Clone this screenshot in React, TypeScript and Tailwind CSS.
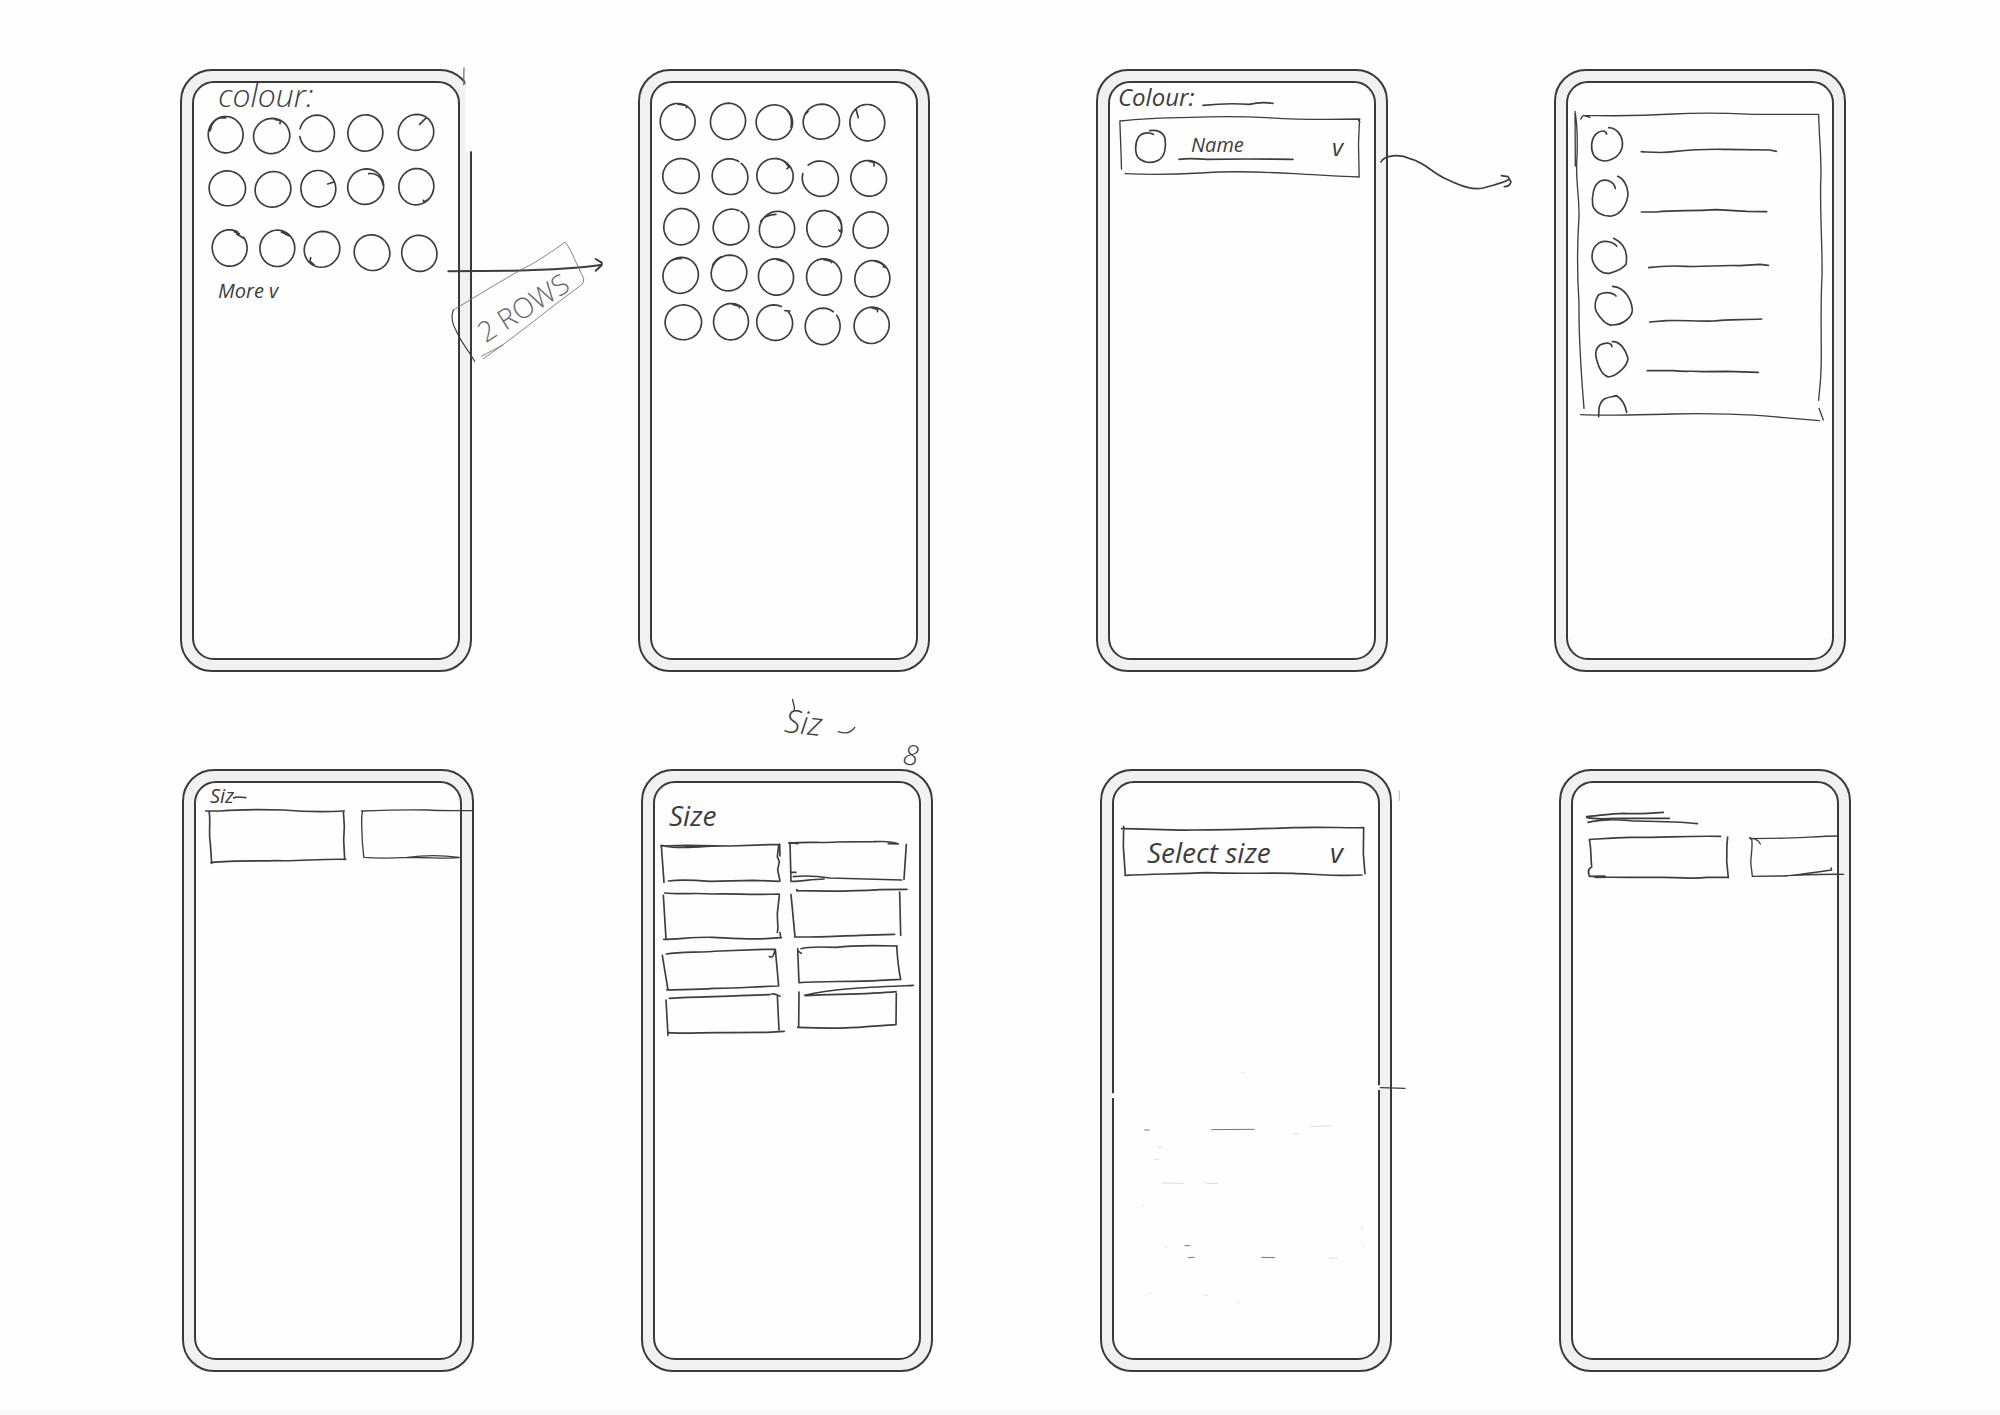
import type { ReactNode } from "react";

/* Drawing coordinates are in thirds of a pixel: 3 units = 1px. */

type InkProps = {
  x: number;
  y: number;
  w: number;
  h: number;
  d?: string;
  width?: number;
  className: string;
  children?: ReactNode;
};

function Ink({ x, y, w, h, d, width = 5, className, children }: InkProps) {
  return (
    <svg
      aria-hidden="true"
      viewBox={`${x} ${y} ${w} ${h}`}
      className={`pointer-events-none overflow-visible ${className}`}
      fill="none"
      stroke="#3d3d3d"
      strokeWidth={width}
      strokeLinecap="round"
      strokeLinejoin="round"
    >
      {d && <path d={d} />}
      {children}
    </svg>
  );
}

type Ring = { c: [number, number]; from?: number; sweep?: number; mark?: string };

function ringPath({ c, from = -60, sweep = 360 }: Ring) {
  const steps = 40;
  const seed = c[0] + c[1];
  const points: string[] = [];
  for (let i = 0; i <= steps; i++) {
    const a = ((from + (sweep * i) / steps) * Math.PI) / 180;
    const r = 53.5 + 1.2 * Math.sin(2 * a + seed);
    points.push(`${(c[0] + r * Math.cos(a)).toFixed(1)} ${(c[1] + r * Math.sin(a)).toFixed(1)}`);
  }
  return `M${points.join("L")}`;
}

const shortPalette: Ring[] = [
  { c: [197, 254], mark: "M150 243C150 225 165 207 180 203L197 204M152 238C154 220 168 207 184 201" },
  { c: [335, 258], mark: "M345 208L361 212L360 221" },
  { c: [471, 250], from: -165, sweep: 334 },
  { c: [616, 249], mark: "M648 206C656 212 662 220 666 230" },
  { c: [768, 247], mark: "M799 203L779 223" },
  { c: [202, 415] },
  { c: [339, 418] },
  { c: [475, 416], mark: "M522 396L503 402" },
  { c: [617, 410], mark: "M626 371C645 368 665 378 669 405" },
  { c: [769, 410], mark: "M820 420C818 435 808 448 792 456L790 451" },
  { c: [209, 594], from: -38, sweep: 334, mark: "M223 545L238 551M230 552L251 565" },
  { c: [352, 595], mark: "M364 546L388 558" },
  { c: [486, 598], mark: "M452 623L450 634L462 644" },
  { c: [636, 608] },
  { c: [778, 610] },
];

const fullPalette: Ring[] = [
  { c: [173, 215], mark: "M172 162L200 167L199 173" },
  { c: [324, 214], mark: "M277 190C284 177 292 170 300 167" },
  { c: [463, 217], mark: "M500 180C512 192 517 210 513 232" },
  { c: [604, 215], mark: "M556 192L564 185" },
  { c: [742, 218], mark: "M708 178L715 203" },
  { c: [183, 378] },
  { c: [330, 380], from: -50, sweep: 350 },
  { c: [465, 378], mark: "M470 326C488 328 500 338 507 352L501 356" },
  { c: [601, 386], from: -132, sweep: 328 },
  { c: [746, 385], mark: "M748 334L762 337L762 348" },
  { c: [184, 530] },
  { c: [333, 531], from: -50, sweep: 346, mark: "M363 485L368 489" },
  { c: [471, 538], mark: "M422 514C430 500 445 494 468 493" },
  { c: [613, 536], mark: "M655 500C664 512 667 530 662 546L656 540" },
  { c: [752, 540] },
  { c: [182, 676], mark: "M150 634C160 626 170 625 183 626" },
  { c: [327, 669], mark: "M278 645C286 631 294 624 303 620" },
  { c: [468, 681], mark: "M470 628L495 636" },
  { c: [612, 681], mark: "M612 629L636 634L634 638" },
  { c: [757, 686], mark: "M760 632C778 635 788 641 797 652L790 650" },
  { c: [190, 817] },
  { c: [333, 815], mark: "M338 763L360 769L358 773" },
  { c: [464, 818], from: -38, sweep: 330, mark: "M495 782L510 783" },
  { c: [608, 829], from: -38, sweep: 344 },
  { c: [755, 826], mark: "M756 774L773 778L772 785" },
];

function Palette({ rings, x, y, cellH, className }: { rings: Ring[]; x: number; y: number; cellH: number; className: string }) {
  return (
    <div className={`grid grid-cols-5 ${className}`}>
      {rings.map((ring, i) => (
        <button key={i} type="button" aria-label={`Colour ${i + 1}`} className="flex justify-center">
          <Ink
            x={x + (i % 5) * 144}
            y={y + Math.floor(i / 5) * cellH}
            w={144}
            h={cellH}
            d={`${ringPath(ring)}${ring.mark ?? ""}`}
            className="w-full"
          />
        </button>
      ))}
    </div>
  );
}

function Phone({ overlay, children }: { overlay?: ReactNode; children?: ReactNode }) {
  return (
    <section className="relative flex min-h-[603px] flex-col rounded-[32px] border-2 border-[#3a3a3a] bg-[#f1f1f1] p-[10px]">
      <div className="flex flex-1 flex-col rounded-[22px] border-2 border-[#3a3a3a] bg-[#fefefe]">{children}</div>
      {overlay}
    </section>
  );
}

function Overlay({ x, y, children }: { x: number; y: number; children: ReactNode }) {
  return (
    <Ink x={x} y={y} w={876} h={1809} className="absolute -top-0.5 -left-0.5 h-[603px] w-[292px]">
      {children}
    </Ink>
  );
}

const options = [
  {
    ring: "M200 252C198 240 180 240 167 253C152 270 152 300 161 315C172 332 195 338 215 328C240 317 250 295 247 275C244 252 228 234 206 233",
    line: "M304 305C340 307 370 310 400 305C450 300 500 297 550 298L690 300L709 304",
  },
  {
    ring: "M226 415C222 395 200 385 180 394C160 405 155 440 158 465C163 485 185 500 215 498C245 492 263 460 264 430C262 405 250 385 233 379",
    line: "M304 486L350 486C400 480 450 484 530 479L620 484L680 485",
  },
  {
    ring: "M230 588C220 575 195 570 178 578C160 590 154 610 157 630C165 655 185 672 208 670C230 664 250 655 258 643C262 620 262 585 221 565",
    line: "M326 653C360 648 400 647 440 649C490 652 540 644 600 647L660 643L685 646",
  },
  {
    ring: "M228 738C215 725 190 725 175 735C163 755 165 775 169 785C180 805 200 827 218 825C250 825 277 800 277 780C275 750 255 712 218 709",
    line: "M329 816L380 812C420 810 470 814 520 813C560 808 610 810 665 807",
  },
  {
    ring: "M216 890C214 876 195 877 180 885C167 895 165 910 169 925C175 950 185 975 205 981C230 978 262 950 264 925C258 900 240 873 217 875",
    line: "M322 962L400 962C430 966 460 962 490 965L560 964L655 967",
  },
  { ring: "M176 1100L177 1075C180 1060 185 1052 193 1047C205 1040 220 1040 230 1037C248 1048 256 1066 260 1087", line: "" },
];

const sizeBoxes = [
  "M122 498L200 496L330 498L478 493M125 496C160 508 220 500 300 498M124 498L132 607M145 603C180 598 220 600 270 604L400 601L478 604M476 495L472 530L478 545L473 570L480 603M479 492L480 528",
  "M507 490C560 484 600 490 650 486L760 485C790 484 815 482 835 492L805 491M507 488L534 491M510 490L513 604C540 605 570 598 612 597M515 577L528 577M520 590C560 585 590 588 630 594L845 600M859 493L852 598",
  "M134 639C180 644 220 638 280 642C340 640 400 646 478 642M130 646L138 776M131 778C180 777 230 770 280 772C340 775 400 780 450 775L484 773M478 646L472 700C472 730 476 745 472 757M480 758L482 772",
  "M530 632C600 634 700 634 780 629L861 628M530 629L535 634M513 644L525 770M524 771C600 772 650 768 720 766L824 763M839 636L842 766",
  "M139 822C180 815 230 818 300 813L430 808L464 808M127 826L144 930M140 930C180 928 230 930 280 925C340 926 400 920 476 918M466 808L476 918M464 812C462 828 456 835 448 829",
  "M543 806C560 800 600 800 650 802C700 795 760 796 832 798M533 806L537 908M533 812L544 820M537 908C600 903 700 906 780 901L842 898M830 798C832 830 836 870 842 898",
  "M148 955C220 950 300 950 360 947L450 944M455 942C468 940 474 946 480 949M138 960L144 1066M146 1058C200 1062 260 1056 320 1058L440 1057L493 1054M472 946L477 1050",
  "M554 946C640 925 740 922 880 916M556 947C640 942 740 944 828 935M537 936L536 1040M533 1042C600 1045 680 1046 740 1040L828 1034M829 940L828 1034",
];

export default function App() {
  return (
    <main className="flex min-h-screen flex-col border-b-4 border-[#f8f8f8] bg-[#fefefe] pt-[69px] font-['Open_Sans',sans-serif] text-[#3d3d3d]">
      <div className="grid grid-cols-4 gap-x-[166px] pr-[154px] pl-[180px]">
        <Phone
          overlay={
            <>
              <Overlay x={60} y={57}>
                <path d="M916 60H944V304H916Z" fill="#fefefe" stroke="none" />
                <path d="M912 54L911 104" stroke="#777" strokeWidth="4" />
                <path d="M865 664L1060 662C1150 660 1250 656 1322 645M1307 627L1325 638L1325 646L1307 662" strokeWidth="6" />
                <path
                  d="M880 780C980 720 1060 670 1120 640C1160 615 1195 592 1215 576C1235 600 1250 645 1271 685Q1273 698 1264 705C1180 765 1080 850 970 926M965 918C990 905 1010 895 1028 885"
                  stroke="#6b6b6b"
                  strokeWidth="2.5"
                />
                <path d="M880 780C872 800 878 825 890 845C905 880 925 900 944 934" strokeWidth="3.5" />
              </Overlay>
              <p className="absolute top-[222px] left-[290px] -rotate-[32deg] text-[28px] leading-none font-light whitespace-nowrap text-[#666]">
                2 ROWS
              </p>
            </>
          }
        >
          <h2 className="pl-6 text-[32px] leading-6 font-light italic">colour:</h2>
          <Palette rings={shortPalette} x={126} y={171} cellH={168} className="pr-4 pl-2" />
          <button type="button" className="mt-1 self-start pl-6 text-xl leading-6 italic">
            More v
          </button>
        </Phone>

        <Phone>
          <Palette rings={fullPalette} x={108} y={147} cellH={150} className="pt-4 pr-5 pl-1" />
        </Phone>

        <Phone
          overlay={
            <Overlay x={48} y={57}>
              <path d="M903 336C912 315 960 311 990 326C1040 340 1050 365 1100 388C1150 412 1180 420 1210 414C1240 404 1265 402 1288 388M1264 377L1284 380L1293 396C1290 405 1282 410 1273 410" />
            </Overlay>
          }
        >
          <div className="flex items-end gap-2 pt-0.5 pl-2">
            <label htmlFor="colour" className="text-2xl leading-6 italic">
              Colour:
            </label>
            <Ink x={381} y={120} w={210} h={54} d="M381 163C430 158 490 158 520 160C545 154 570 154 591 157" className="w-[70px]" />
          </div>
          <div className="relative mt-2 mr-[14px] ml-[10px] flex h-[60px] items-center">
            <Ink
              x={120}
              y={198}
              w={717}
              h={180}
              width={4}
              d="M118 210C180 203 260 200 330 199C420 196 500 197 560 200C650 206 750 206 838 204M118 210L121 290L123 354M134 368C200 371 290 370 360 366C440 360 540 362 640 368C720 372 780 377 836 378M837 205L834 280L836 377M833 205L838 214"
              className="absolute inset-0 size-full"
            />
            <Ink
              x={165}
              y={240}
              w={96}
              h={102}
              d="M220 253C205 245 185 248 175 262C164 280 165 310 174 322C190 338 215 342 235 331C255 320 259 290 255 265C250 246 230 238 209 242"
              className="ml-[15px] h-[34px] w-8"
            />
            <Ink x={298} y={200} w={342} h={180} d="M298 327C330 323 350 325 380 327L500 326L640 327" className="absolute inset-y-0 left-[59px] w-[114px]" />
            <select id="colour" className="mb-1 ml-6 flex-1 appearance-none bg-transparent text-xl leading-7 italic outline-none">
              <option>Name</option>
            </select>
            <span className="pointer-events-none absolute right-[17px] text-2xl leading-7 italic">v</span>
          </div>
        </Phone>

        <Phone>
          <div className="relative mt-7 mr-[11px] ml-2 h-[308px] overflow-visible">
            <Ink
              x={108}
              y={183}
              w={735}
              h={924}
              width={4}
              d="M122 207L130 196L150 202M130 196C200 198 300 198 400 192C480 187 560 189 640 193L836 193M105 184L106 348M106 190C112 230 114 270 110 340C108 400 118 440 117 500C110 600 112 680 117 760C116 850 120 930 132 1075M836 193C838 280 846 330 842 400C840 500 848 600 846 680C840 780 846 900 843 960C842 1000 838 1020 836 1051M837 1075L850 1110M122 1094C200 1098 300 1094 400 1092C500 1088 640 1094 700 1100L838 1112"
              className="absolute inset-0 size-full"
            />
            <ul className="flex flex-col pt-1">
              {options.map((option, i) => (
                <li key={i}>
                  <button type="button" aria-label={`Colour option ${i + 1}`} className="flex w-full gap-[10px] pl-4">
                    <Ink x={156} y={195 + i * 156} w={108} h={156} d={option.ring} className="w-9" />
                    <Ink x={294} y={195 + i * 156} w={420} h={156} d={option.line || undefined} className="w-[140px]" />
                  </button>
                </li>
              ))}
            </ul>
          </div>
        </Phone>
      </div>

      <div className="mt-[97px] mb-8 grid grid-cols-4 gap-x-[167px] pr-[149px] pl-[182px]">
        <Phone>
          <div className="flex items-center gap-px pl-[14px]">
            <h2 className="text-xl leading-[26px] italic">Siz</h2>
            <Ink x={270} y={150} w={36} h={36} d="M266 174C274 168 285 172 302 173" className="size-3" />
          </div>
          <div className="mt-px flex gap-4 pl-3">
            <button type="button" aria-label="Size option 1" className="h-[52px] w-[136px]">
              <Ink
                x={144}
                y={210}
                w={408}
                h={156}
                d="M137 213L180 213C240 208 310 208 370 210C430 215 490 216 553 213M147 213C153 240 145 280 151 310L155 370M153 368C220 360 290 364 350 362C420 364 480 356 557 358M550 213L553 260L551 300L554 358"
                className="size-full"
              />
            </button>
            <button type="button" aria-label="Size option 2" className="h-[52px] flex-1">
              <Ink
                x={600}
                y={210}
                w={297}
                h={156}
                width={4}
                d="M603 213C680 210 750 209 800 210C850 213 890 211 937 212M606 214C600 240 606 280 605 300L610 352M610 352C650 355 690 355 740 352C800 344 850 346 896 352M740 353C800 350 850 358 896 353"
                className="size-full"
              />
            </button>
          </div>
        </Phone>

        <Phone
          overlay={
            <>
              <p className="absolute -top-[67px] left-[142px] rotate-6 text-[32px] leading-9 font-light italic">Siz</p>
              <p className="absolute -top-[33px] left-[260px] rotate-6 text-[28px] leading-8 font-light italic">8</p>
              <Overlay x={63} y={267}>
                <path d="M518 58C517 70 526 75 523 90M655 155C675 162 692 160 704 142" strokeWidth="4" />
              </Overlay>
            </>
          }
        >
          <h2 className="pt-5 pl-[14px] text-[28px] leading-6 italic">Size</h2>
          <div className="mt-[15px] grid grid-cols-2 gap-[10px] pr-[11px] pl-[7px]">
            {sizeBoxes.map((d, i) => (
              <button key={i} type="button" aria-label={`Size option ${i + 1}`} className="h-10">
                <Ink x={126 + (i % 2) * 384} y={486 + Math.floor(i / 2) * 150} w={354} h={120} d={d} className="size-full" />
              </button>
            ))}
          </div>
        </Phone>

        <Phone
          overlay={
            <Overlay x={60} y={57}>
              <path d="M958 122V152" stroke="#bbb" strokeWidth="3" />
              <path d="M99 1030V1044M897 1006V1020" stroke="#fefefe" strokeWidth="7" strokeLinecap="butt" />
              <path d="M901 1013L975 1015" strokeWidth="4" />
              <path d="M395 1139L523 1138M315 1487L329 1487M325 1523L342 1522M545 1522L584 1523M194 1140L207 1140" stroke="#777" strokeWidth="3" />
              <path
                d="M690 1130L755 1127M640 1153L656 1153M235 1192L247 1193M224 1228L236 1228M246 1299L310 1300M372 1296L384 1300L414 1301M748 1525L772 1524M846 1428V1438M850 1485V1490M256 1488V1492M208 1629H212M375 1636H384M475 1650V1657M488 968H491M188 1368H190"
                stroke="#ccc"
                strokeWidth="2"
              />
            </Overlay>
          }
        >
          <div className="relative mt-[45px] mr-[14px] ml-[9px] flex h-12 items-center">
            <Ink
              x={129}
              y={234}
              w={723}
              h={144}
              d="M125 236C200 236 270 242 340 240C440 240 560 236 640 233C720 230 790 234 851 233M131 229L130 290L136 376M135 376C220 372 300 372 380 368C480 372 560 368 640 370C700 372 780 380 846 375M851 233L850 310L855 371"
              className="absolute inset-0 size-full"
            />
            <select aria-label="Select size" className="flex-1 appearance-none bg-transparent pl-6 text-[28px] leading-10 italic outline-none">
              <option>Select size</option>
            </select>
            <span className="pointer-events-none absolute right-[21px] text-[28px] leading-10 italic">v</span>
          </div>
        </Phone>

        <Phone>
          <Ink
            x={141}
            y={183}
            w={333}
            h={42}
            d="M140 200C180 196 220 190 250 190C290 192 330 190 370 187M140 202C170 210 200 205 240 205L388 205M144 217C190 205 240 210 285 213C350 214 420 215 472 221"
            className="mt-7 ml-[14px] h-[14px] w-[111px]"
          />
          <div className="mt-[11px] flex gap-[22px] pl-4">
            <button type="button" aria-label="Size option 1" className="h-[42px] w-[139px] shrink-0">
              <Ink
                x={147}
                y={255}
                w={417}
                h={126}
                d="M148 266C200 262 240 258 280 259C360 260 440 254 542 256M148 266C154 290 152 320 155 348C144 352 144 365 148 376L195 375M165 379C240 378 300 380 360 379C430 378 460 385 500 379L565 379M563 258C558 290 562 310 560 330L565 380"
                className="size-full"
              />
            </button>
            <button type="button" aria-label="Size option 2" className="h-[42px] w-[103px] shrink-0">
              <Ink
                x={630}
                y={255}
                w={309}
                h={126}
                width={4}
                d="M629 263L690 262C760 262 830 256 894 255M630 259L636 267M640 262L655 270L661 279M635 262C640 300 628 325 634 350L637 376C680 375 700 375 736 375C790 368 830 364 875 357L873 350M736 374C790 372 850 369 911 370"
                className="size-full"
              />
            </button>
          </div>
        </Phone>
      </div>
    </main>
  );
}
